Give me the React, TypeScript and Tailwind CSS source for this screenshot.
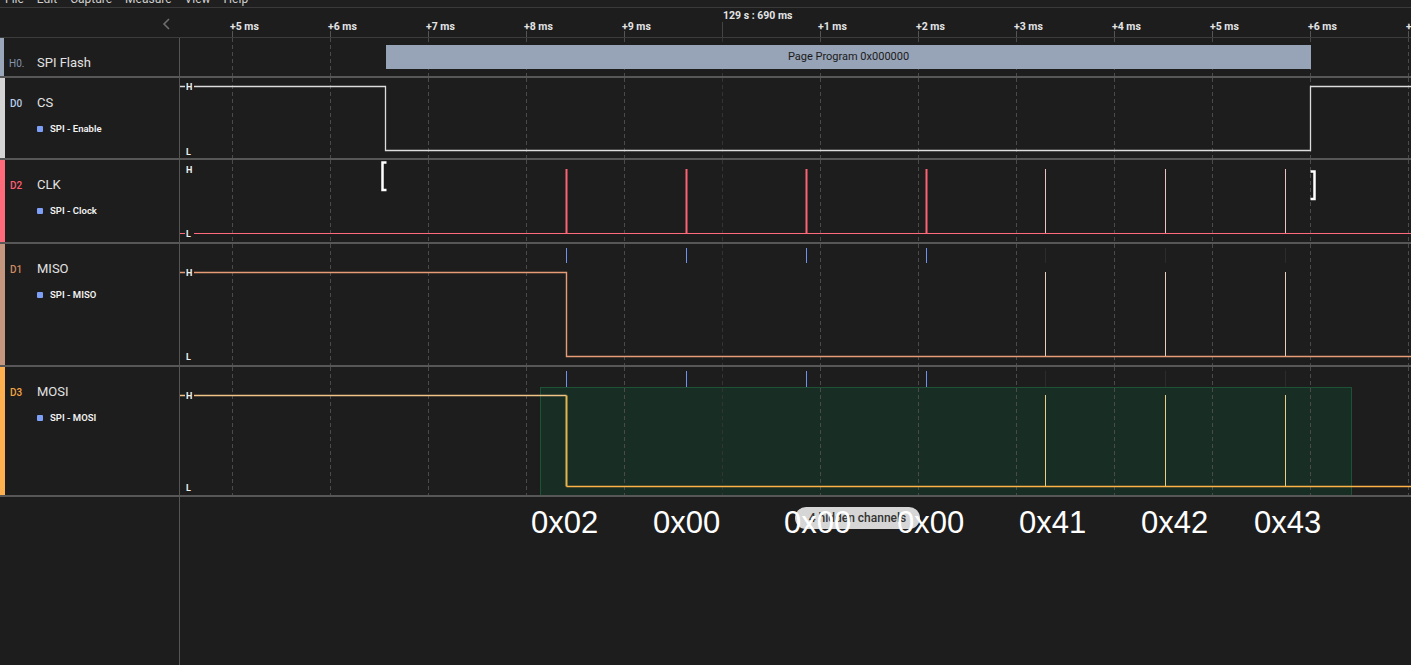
import React from "react";

const GRID = [232, 330, 428, 526, 624, 722, 820, 918, 1016, 1114, 1212, 1310, 1408];
const LABELS = ["+5 ms", "+6 ms", "+7 ms", "+8 ms", "+9 ms", "", "+1 ms", "+2 ms", "+3 ms", "+4 ms", "+5 ms", "+6 ms", "+7 ms"];
const W = 1231;
const X = (x: number) => x - 180;
const FONT = "Roboto, 'Noto Sans', sans-serif";

function Grid({ h }: { h: number }) {
  return (
    <>
      {GRID.map((x) => (
        <line
          key={x}
          x1={X(x) + 0.5}
          x2={X(x) + 0.5}
          y1={0}
          y2={h}
          stroke={x === 722 ? "#333333" : "#4a4a4a"}
          strokeWidth={1}
          strokeDasharray="4 3"
        />
      ))}
    </>
  );
}

function Lab({ y, t }: { y: number; t: string }) {
  return (
    <g>
      <rect x={5} y={y - 5} width={9} height={10} fill="#1d1d1d" />
      <text x={6} y={y + 3.5} fontSize={9} fontWeight={700} fill="#f0f0f0" fontFamily={FONT}>
        {t}
      </text>
    </g>
  );
}

function Left({
  stripe,
  code,
  codeColor,
  name,
  sub,
}: {
  stripe: string;
  code: string;
  codeColor: string;
  name: string;
  sub?: string;
}) {
  return (
    <div className="w-[180px] shrink-0 h-full flex border-r border-[#555]">
      <div className="w-[5px] h-full shrink-0" style={{ background: stripe }} />
      <div className="pl-[5px] pt-[17px] flex flex-col">
        <div className="flex items-baseline">
          <span className="w-[27px] text-[10px] font-medium" style={{ color: codeColor }}>
            {code}
          </span>
          <span className="text-[13px] leading-[16px] text-[#e2e2e2]">{name}</span>
        </div>
        {sub && (
          <div className="flex items-center mt-[12px] pl-[27px] h-[12px]">
            <span className="w-[6px] h-[6px] rounded-[1px] bg-[#7d9ff7]" />
            <span className="ml-[7px] text-[9.5px] font-semibold text-[#f2f2f2]">{sub}</span>
          </div>
        )}
      </div>
    </div>
  );
}

function Divider() {
  return <div className="h-[2px] w-full bg-[#575757] shrink-0" />;
}

export default function App() {
  const pulsesStrong = [566, 686, 806, 926].map(X);
  const pulsesThin = [1045, 1165, 1285].map(X);
  const hex = [
    { x: 531, t: "0x02" },
    { x: 653, t: "0x00" },
    { x: 784, t: "0x00" },
    { x: 897, t: "0x00" },
    { x: 1019, t: "0x41" },
    { x: 1141, t: "0x42" },
    { x: 1254, t: "0x43" },
  ];
  return (
    <div
      className="w-[1411px] h-[665px] bg-[#1d1d1d] overflow-hidden flex flex-col text-[#ddd]"
      style={{ fontFamily: FONT }}
    >
      {/* menu bar (clipped) */}
      <div className="h-[8px] shrink-0 border-b border-[#3a3a3a] overflow-hidden bg-[#1f1f1f] relative">
        <div className="flex gap-[13px] pl-[5px] text-[12px] leading-[12px] text-[#cfcfcf] -mt-[7px]">
          <span>File</span>
          <span>Edit</span>
          <span>Capture</span>
          <span>Measure</span>
          <span>View</span>
          <span>Help</span>
        </div>
      </div>

      {/* header / ruler */}
      <div className="h-[30px] shrink-0 border-b border-[#3c3c3c] flex">
        <div className="w-[180px] shrink-0 relative">
          <svg className="absolute left-[161px] top-[9px]" width="12" height="14" viewBox="0 0 12 14">
            <polyline points="8,2 3,7 8,12" fill="none" stroke="#6e6e6e" strokeWidth="1.6" />
          </svg>
        </div>
        <div className="flex-1 relative">
          <svg className="absolute inset-0" width={W} height={29}>
            {GRID.map((x) => (
              <line
                key={x}
                x1={X(x) + 0.5}
                x2={X(x) + 0.5}
                y1={x === 722 ? 14 : 23}
                y2={29}
                stroke={x === 722 ? "#444" : "#555"}
              />
            ))}
          </svg>
          {GRID.map((x, i) =>
            LABELS[i] ? (
              <div
                key={x}
                className="absolute top-[13px] text-[10.5px] leading-[12px] font-bold text-[#e4e4e4] whitespace-nowrap"
                style={{ left: X(x) - 2 }}
              >
                {LABELS[i]}
              </div>
            ) : null
          )}
          <div className="absolute top-[2px] left-[543px] text-[10.5px] leading-[12px] font-bold text-[#e4e4e4] whitespace-nowrap">
            129 s : 690 ms
          </div>
        </div>
      </div>

      {/* H0 */}
      <div className="h-[38px] shrink-0 flex">
        <div className="w-[180px] shrink-0 h-full flex border-r border-[#555]">
          <div className="w-[4px] h-full bg-[#9aa6ba]" />
          <div className="pl-[5px] pt-[17px] flex items-baseline">
            <span className="w-[28px] text-[10px] text-[#8596ae]">H0.</span>
            <span className="text-[13px] leading-[16px] text-[#e2e2e2]">SPI Flash</span>
          </div>
        </div>
        <div className="flex-1 relative">
          <svg className="absolute inset-0" width={W} height={38}>
            <Grid h={38} />
          </svg>
          <div className="absolute left-[206px] top-[7px] w-[925px] h-[24px] bg-[#97a3b6] flex items-center justify-center text-[11px] text-[#1b1b1b]">
            Page Program 0x000000
          </div>
        </div>
      </div>
      <Divider />

      {/* CS */}
      <div className="h-[80px] shrink-0 flex">
        <Left stripe="#d4d4d4" code="D0" codeColor="#b9cde8" name="CS" sub="SPI - Enable" />
        <div className="flex-1 relative">
          <svg className="absolute inset-0" width={W} height={80}>
            <Grid h={80} />
            <path d={`M0 8.5 H205.5 V72.5 H1130.5 V8.5 H${W}`} fill="none" stroke="#dcdcdc" strokeWidth={1.3} />
            <Lab y={8} t="H" />
            <Lab y={73} t="L" />
          </svg>
        </div>
      </div>
      <Divider />

      {/* CLK */}
      <div className="h-[82px] shrink-0 flex">
        <Left stripe="#ff6b7b" code="D2" codeColor="#ff5d70" name="CLK" sub="SPI - Clock" />
        <div className="flex-1 relative">
          <svg className="absolute inset-0" width={W} height={82}>
            <Grid h={82} />
            <line x1={0} x2={W} y1={73.5} y2={73.5} stroke="#ff6b7b" strokeWidth={1.2} />
            {pulsesStrong.map((x) => (
              <line key={x} x1={x + 0.5} x2={x + 0.5} y1={9} y2={73} stroke="#ff6275" strokeWidth={2} />
            ))}
            {pulsesThin.map((x) => (
              <line key={x} x1={x + 0.5} x2={x + 0.5} y1={9} y2={73} stroke="#ecc0c4" strokeWidth={1} />
            ))}
            <polyline points="206.5,2.5 202.5,2.5 202.5,30 206.5,30" fill="none" stroke="#ffffff" strokeWidth={2.5} />
            <polyline points="1130.5,11.5 1134.5,11.5 1134.5,39 1130.5,39" fill="none" stroke="#ffffff" strokeWidth={2.5} />
            <Lab y={9} t="H" />
            <Lab y={73} t="L" />
          </svg>
        </div>
      </div>
      <Divider />

      {/* MISO */}
      <div className="h-[121px] shrink-0 flex">
        <Left stripe="#c4977e" code="D1" codeColor="#cf8a62" name="MISO" sub="SPI - MISO" />
        <div className="flex-1 relative">
          <svg className="absolute inset-0" width={W} height={121}>
            <Grid h={121} />
            {pulsesStrong.map((x) => (
              <line key={x} x1={x + 0.5} x2={x + 0.5} y1={4} y2={19} stroke="#6d93f2" strokeWidth={1} />
            ))}
            {pulsesThin.map((x) => (
              <line key={x} x1={x + 0.5} x2={x + 0.5} y1={4} y2={19} stroke="#2c2c2c" strokeWidth={1} />
            ))}
            {pulsesThin.map((x) => (
              <line key={"t" + x} x1={x + 0.5} x2={x + 0.5} y1={28} y2={112} stroke="#e8cdbf" strokeWidth={1} />
            ))}
            <path d={`M0 28.5 H386.5 V112.5 H${W}`} fill="none" stroke="#e89c76" strokeWidth={1.4} />
            <Lab y={28} t="H" />
            <Lab y={112} t="L" />
          </svg>
        </div>
      </div>
      <Divider />

      {/* MOSI */}
      <div className="h-[128px] shrink-0 flex">
        <Left stripe="#ffb150" code="D3" codeColor="#f2a343" name="MOSI" sub="SPI - MOSI" />
        <div className="flex-1 relative">
          <svg className="absolute inset-0" width={W} height={128}>
            <rect x={360.5} y={20.5} width={811} height={108} fill="#182e24" stroke="#1e5236" strokeWidth={1} />
            <Grid h={128} />
            {pulsesStrong.map((x) => (
              <line key={x} x1={x + 0.5} x2={x + 0.5} y1={4} y2={20} stroke="#6d93f2" strokeWidth={1} />
            ))}
            {pulsesThin.map((x) => (
              <line key={x} x1={x + 0.5} x2={x + 0.5} y1={4} y2={20} stroke="#2c2c2c" strokeWidth={1} />
            ))}
            {pulsesThin.map((x) => (
              <line key={"t" + x} x1={x + 0.5} x2={x + 0.5} y1={28} y2={119} stroke="#eacb8a" strokeWidth={1} />
            ))}
            <path d={`M0 28.5 H386.5`} fill="none" stroke="#f1c487" strokeWidth={1.3} />
            <path d={`M386.5 28.5 V119.5`} fill="none" stroke="#e5b64f" strokeWidth={2} />
            <path d={`M386.5 119.5 H${W}`} fill="none" stroke="#ffb347" strokeWidth={1.4} />
            <Lab y={28} t="H" />
            <Lab y={120} t="L" />
          </svg>
        </div>
      </div>
      <Divider />

      {/* bottom area */}
      <div className="flex-1 flex">
        <div className="w-[180px] shrink-0 h-full border-r border-[#555]" />
        <div className="flex-1 relative">
          <div className="absolute left-[615px] top-[10px] w-[125px] h-[22px] rounded-full bg-[#d6d6d6] flex items-center justify-center text-[12px] font-medium text-[#333]">
            4 hidden channels
          </div>
          {hex.map((h, i) => (
            <div
              key={i}
              className="absolute top-[10px] text-[31px] leading-[31px] text-white whitespace-nowrap"
              style={{ left: X(h.x), fontFamily: "'Liberation Sans', Arial, sans-serif" }}
            >
              {h.t}
            </div>
          ))}
        </div>
      </div>
    </div>
  );
}
